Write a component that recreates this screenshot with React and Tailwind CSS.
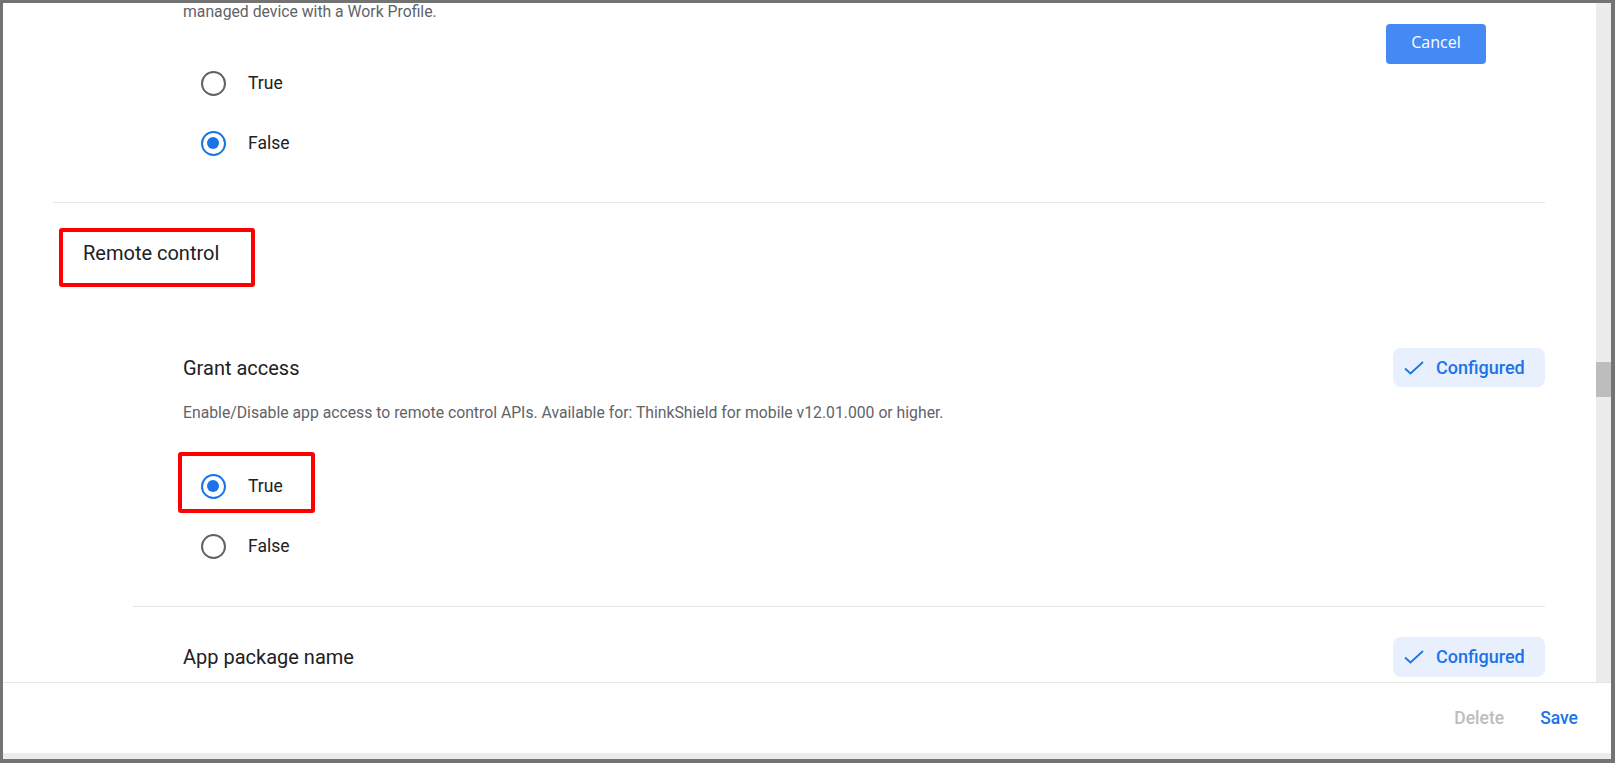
import React from "react";

const Radio = ({ checked, label, children }) => (
  <div className="relative flex items-center h-[60px] pl-[17.5px]">
    {children}
    <span
      className={
        checked
          ? "w-[25px] h-[25px] rounded-full border-[2.5px] border-[#1a73e8] flex items-center justify-center"
          : "w-[25px] h-[25px] rounded-full border-[2.5px] border-[#5f6368] flex items-center justify-center"
      }
    >
      {checked && <span className="w-[12px] h-[12px] rounded-full bg-[#1a73e8]" />}
    </span>
    <span className="ml-[22.5px] text-[17.5px] leading-[24px] text-[#202124]">{label}</span>
  </div>
);

const Chip = () => (
  <div className="w-[152px] h-full rounded-[8px] bg-[#e8f0fe] flex items-center pl-[11px]">
    <svg width="20" height="14" viewBox="0 0 20 14" fill="none">
      <path d="M1 7.5 L6.5 12.5 L19 1" stroke="#1a73e8" strokeWidth="1.8" />
    </svg>
    <span className="ml-[12px] text-[18px] font-medium text-[#1a73e8] leading-[24px]">Configured</span>
  </div>
);

export default function App() {
  return (
    <div
      className="w-[1615px] h-[763px] bg-[#737373] pt-[3px] pl-[3px] pr-[4px] pb-[4px] overflow-hidden"
      style={{ fontFamily: "Roboto, 'Liberation Sans', sans-serif" }}
    >
      <div className="flex flex-col h-full bg-white">
        <div className="flex h-[679px] overflow-hidden">
          <div className="relative flex-1 overflow-hidden">
            <div className="-mt-[1px] pl-[180px] h-[20px] leading-[20px] text-[15.75px] text-[#5f6368]">
              managed device with a Work Profile.
            </div>
            <div className="mt-[31px] pl-[180px]">
              <Radio label="True" />
              <Radio label="False" checked />
            </div>
            <div className="mt-[29px] ml-[50px] mr-[51px] h-px bg-[#e6e6e6]" />
            <div className="relative mt-[36px] ml-[80px] w-fit text-[20px] leading-[28px] text-[#202124]">
              Remote control
              <div className="absolute left-[-24px] top-[-11px] w-[196px] h-[59px] border-[4px] border-[#ff0000] rounded-[3px]" />
            </div>
            <div className="mt-[81px] ml-[130px] mr-[51px] border-b border-[#e6e6e6] pb-[30px]">
              <div className="flex items-center justify-between h-[39px] pl-[50px]">
                <span className="text-[20px] leading-[28px] text-[#202124]">Grant access</span>
                <Chip />
              </div>
              <div className="mt-[16px] pl-[50px] text-[15.75px] leading-[20px] text-[#5f6368]">
                Enable/Disable app access to remote control APIs. Available for: ThinkShield for mobile v12.01.000 or higher.
              </div>
              <div className="mt-[33px] pl-[50px]">
                <Radio label="True" checked>
                  <div className="absolute left-[-5px] top-[-4px] w-[137px] h-[61px] border-[4px] border-[#ff0000] rounded-[3px]" />
                </Radio>
                <Radio label="False" />
              </div>
            </div>
            <div className="mt-[30px] ml-[130px] mr-[51px] pl-[50px] h-[40px] flex items-center justify-between">
              <span className="text-[20px] leading-[28px] text-[#202124]">App package name</span>
              <Chip />
            </div>
            <button
              className="absolute top-[21px] left-[1383px] w-[100px] h-[40px] rounded-[4px] bg-[#4589f5] text-white text-[16px] font-medium leading-none pb-[5px]"
              style={{ fontFamily: "'Open Sans', 'Noto Sans', sans-serif" }}
            >
              Cancel
            </button>
          </div>
          <div className="w-[15px] bg-[#ececec] flex flex-col">
            <div className="mt-[359px] h-[35px] bg-[#bdbdbd]" />
          </div>
        </div>
        <div className="h-px bg-[#e6e6e6]" />
        <div className="h-[70px] flex items-center justify-end gap-[36px] pr-[33px] text-[17.5px] font-medium">
          <span className="text-[#bdbdbd]">Delete</span>
          <span className="text-[#1a73e8]">Save</span>
        </div>
        <div className="h-[6px] bg-[#ececec]" />
      </div>
    </div>
  );
}
